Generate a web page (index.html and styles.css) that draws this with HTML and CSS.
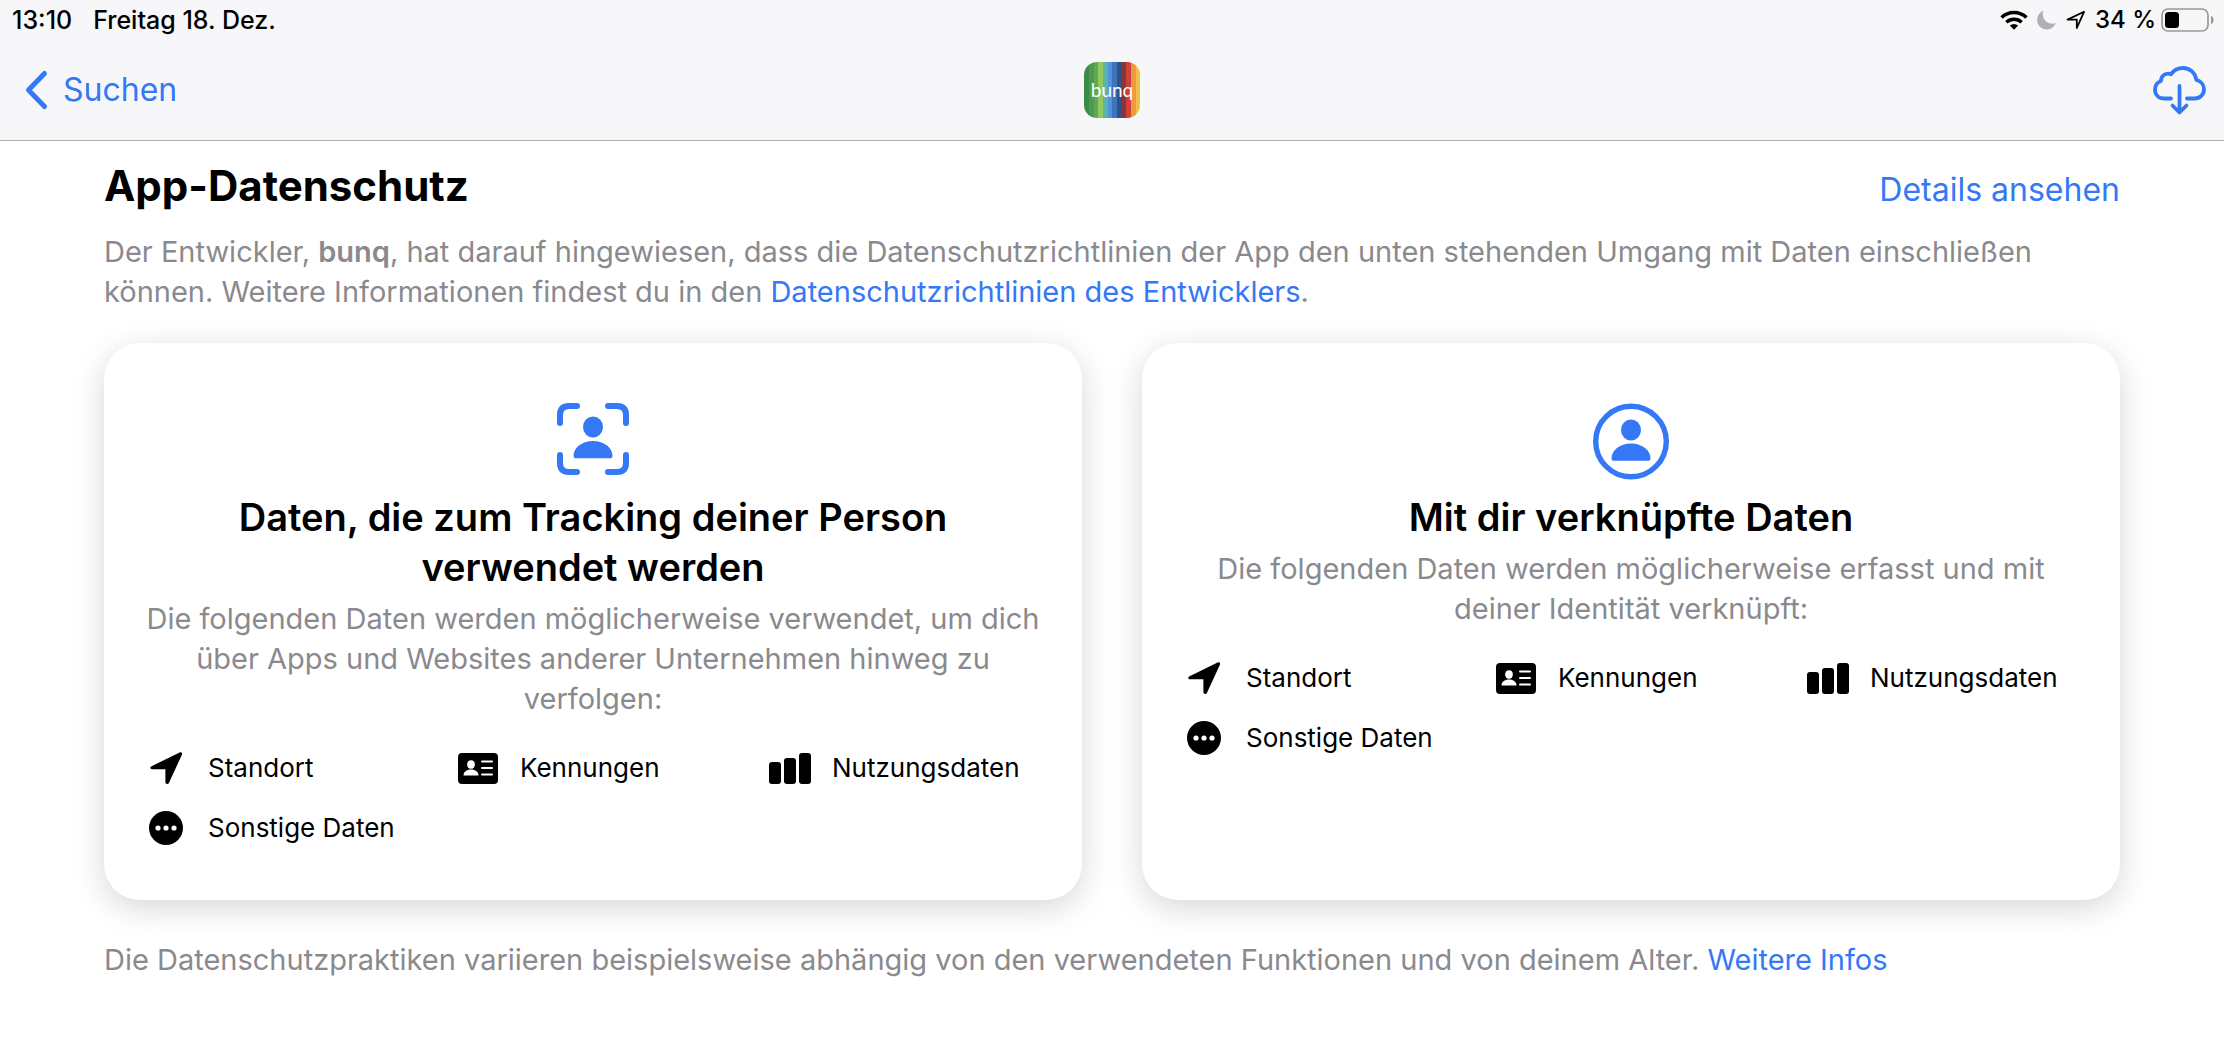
FILE: index.html
```html
<!DOCTYPE html>
<html lang="de">
<head>
<meta charset="utf-8">
<meta name="viewport" content="width=device-width, initial-scale=1">
<title>bunq</title>
<link rel="stylesheet" href="styles.css">
</head>

<body>

<!-- shared symbols -->
<svg class="symbols" aria-hidden="true">
  <symbol id="location" viewBox="0 0 42 36">
    <path d="M6.600 16.200 34.600 2.500c1.700-.8 3.100.5 2.300 2.300L24 32.700c-.9 2-3.600 1.600-3.600-.6V19.200H7.200c-2.300 0-2.500-2.100-.6-3z"/>
  </symbol>
  <symbol id="idcard" viewBox="0 0 42 36">
    <rect x="1" y="3" width="40" height="31" rx="4"/>
    <g fill="#fff">
      <ellipse cx="14" cy="14.500" rx="3.800" ry="4.200"/>
      <path d="M6.500 25.500c0-3.500 3-6 7.500-6s7.500 2.500 7.500 6z"/>
      <rect x="24" y="10.500" width="12" height="2" rx="1"/>
      <rect x="24" y="17" width="12" height="2" rx="1"/>
      <rect x="24" y="23.500" width="12" height="2" rx="1"/>
    </g>
  </symbol>
  <symbol id="bars" viewBox="0 0 42 36">
    <rect x="0" y="12" width="12" height="22" rx="3"/>
    <rect x="15" y="8" width="12" height="26" rx="3"/>
    <rect x="30" y="3" width="12" height="31" rx="3"/>
  </symbol>
  <symbol id="more" viewBox="0 0 42 36">
    <circle cx="21" cy="18" r="17"/>
    <g fill="#fff">
      <circle cx="13" cy="18" r="2.600"/>
      <circle cx="21" cy="18" r="2.600"/>
      <circle cx="29" cy="18" r="2.600"/>
    </g>
  </symbol>
</svg>

<header class="topbar">
  <div class="status">
    <div class="status-group status-left">
      <span>13:10</span>
      <span>Freitag 18. Dez.</span>
    </div>
    <div class="status-group">
      <svg class="wifi" viewBox="0 0 28 20" width="28" height="20">
        <g fill="none" stroke="#000" stroke-width="3.400">
          <path d="M1.500 7.500a18 18 0 0 1 25 0"/>
          <path d="M6.300 12.300a11.300 11.300 0 0 1 15.400 0"/>
        </g>
        <path d="M9.800 15.600a6.200 6.200 0 0 1 8.400 0L14 19.800z"/>
      </svg>
      <svg class="moon" viewBox="0 0 20 20" width="20" height="20">
        <path d="M6.500.8A9.600 9.600 0 1 0 18.800 13 9.400 9.400 0 0 1 6.500.8z" fill="#b0b0b2"/>
      </svg>
      <svg class="arrow" viewBox="0 0 20 20" width="20" height="20">
        <path d="M1.500 9.600 18 1.800 10.800 18V9.600z" fill="none" stroke="#000" stroke-width="1.800" stroke-linejoin="round"/>
      </svg>
      <span>34 %</span>
      <svg class="battery" viewBox="0 0 54 24" width="54" height="24">
        <rect x="1" y="1" width="46" height="22" rx="6" fill="none" stroke="#999" stroke-width="1.700"/>
        <rect x="4" y="4" width="14" height="16" rx="3.500"/>
        <path d="M50 8c3.500 1 3.500 7 0 8z" fill="#999"/>
      </svg>
    </div>
  </div>
  <nav class="navbar">
    <a class="back" href="#">
      <svg viewBox="0 0 24 38" width="24" height="38">
        <path d="M20.500 2.500 4.500 19l16 16.500" fill="none" stroke="currentColor" stroke-width="5" stroke-linecap="round" stroke-linejoin="round"/>
      </svg>
      <span>Suchen</span>
    </a>
    <div class="app-icon"><span>bunq</span></div>
    <button class="download" type="button" aria-label="Laden">
      <svg viewBox="0 0 54 50" width="54" height="50">
        <g fill="none" stroke="currentColor" stroke-width="3.800" stroke-linecap="round" stroke-linejoin="round">
          <path d="M19 33.500H12.500C6.500 33.500 3 29.500 3 24.500c0-4 2.500-7.200 6-8.500 0-5.500 5-8.800 10-6.800C22 5 26 3 31 3c7 0 12.500 5 13.300 11.800 4.200 1 7.700 4.700 7.700 9.400 0 5.300-4 9.300-9.500 9.300H35"/>
          <path d="M27.500 21v26M20.500 40.500l7 7 7-7"/>
        </g>
      </svg>
    </button>
  </nav>
</header>

<main class="content">
  <div class="section-head">
    <h1>App-Datenschutz</h1>
    <a href="#">Details ansehen</a>
  </div>
  <p class="intro">Der Entwickler, <b>bunq</b>, hat darauf hingewiesen, dass die Datenschutzrichtlinien der App den unten stehenden Umgang mit Daten einschließen können. Weitere Informationen findest du in den <a href="#">Datenschutzrichtlinien des Entwicklers</a>.</p>

  <div class="cards">
    <section class="card">
      <svg class="card-icon" viewBox="0 0 78 78" width="78" height="78">
        <g fill="none" stroke="currentColor" stroke-width="6" stroke-linecap="round">
          <path d="M6 23V15q0-9 9-9h8"/>
          <path d="M54 6h9q9 0 9 9v8"/>
          <path d="M72 55v8q0 9-9 9h-9"/>
          <path d="M23 72h-8q-9 0-9-9v-8"/>
        </g>
        <g fill="currentColor">
          <ellipse cx="39" cy="27" rx="10" ry="10.500"/>
          <path d="M19.500 56c0-8 8-15 19.500-15s19.500 7 19.500 15q0 2.200-2 2.200h-35q-2 0-2-2.200z"/>
        </g>
      </svg>
      <h2>Daten, die zum Tracking deiner Person verwendet werden</h2>
      <p>Die folgenden Daten werden möglicherweise verwendet, um dich über Apps und Websites anderer Unternehmen hinweg zu verfolgen:</p>
      <ul>
        <li><svg><use href="#location"/></svg>Standort</li>
        <li><svg><use href="#idcard"/></svg>Kennungen</li>
        <li><svg><use href="#bars"/></svg>Nutzungsdaten</li>
        <li><svg><use href="#more"/></svg>Sonstige Daten</li>
      </ul>
    </section>

    <section class="card">
      <svg class="card-icon" viewBox="0 0 78 78" width="78" height="78">
        <circle cx="39" cy="41.500" r="35.300" fill="none" stroke="currentColor" stroke-width="5.400"/>
        <g fill="currentColor">
          <ellipse cx="39" cy="30" rx="10" ry="10.500"/>
          <path d="M19.500 58.500c0-8 8-15 19.500-15s19.500 7 19.500 15q0 2.200-2 2.200h-35q-2 0-2-2.200z"/>
        </g>
      </svg>
      <h2>Mit dir verknüpfte Daten</h2>
      <p>Die folgenden Daten werden möglicherweise erfasst und mit deiner Identität verknüpft:</p>
      <ul>
        <li><svg><use href="#location"/></svg>Standort</li>
        <li><svg><use href="#idcard"/></svg>Kennungen</li>
        <li><svg><use href="#bars"/></svg>Nutzungsdaten</li>
        <li><svg><use href="#more"/></svg>Sonstige Daten</li>
      </ul>
    </section>
  </div>

  <p class="footnote">Die Datenschutzpraktiken variieren beispielsweise abhängig von den verwendeten Funktionen und von deinem Alter. <a href="#">Weitere Infos</a></p>
</main>

</body>
</html>
```

FILE: styles.css
```css
* {
  box-sizing: border-box;
}

body {
  margin: 0;
  background-color: #fff;
  color: #000;
  font-family: Inter, "Liberation Sans", sans-serif;
  font-size: 29px;
  line-height: 40px;
}

h1, h2, p, ul {
  margin: 0;
  padding: 0;
}

a {
  color: #3478f6;
  text-decoration: none;
}

svg {
  display: block;
  flex: none;
  overflow: visible;
}

.symbols {
  position: absolute;
  width: 0;
  height: 0;
}

/* status and navigation bar */
.topbar {
  background-color: #f7f7f9;
  border-bottom: 1px solid #b0b0b2;
}

.status {
  display: flex;
  justify-content: space-between;
  height: 40px;
  padding: 0 9px 0 12px;
  font-size: 24px;
  font-weight: 500;
}

.status-group {
  display: flex;
  align-items: center;
  gap: 9px;
}

.status-left {
  gap: 21px;
  font-size: 25px;
}

.battery {
  margin-left: -4px;
}

.navbar {
  display: grid;
  grid-template-columns: 1fr auto 1fr;
  align-items: center;
  height: 100px;
  padding: 0 18px;
}

.back {
  display: flex;
  align-items: center;
  gap: 15px;
  padding-left: 6px;
  font-size: 32px;
}

.app-icon {
  display: flex;
  align-items: center;
  justify-content: center;
  width: 56px;
  height: 56px;
  border-radius: 13px;
  background: linear-gradient(90deg,
    #3b8a47 0 9%, #4d9a4c 9% 17%, #5fa956 17% 25%, #92ca62 25% 34%,
    #5bb5a6 34% 42%, #4f93dc 42% 50%, #3f74bd 50% 59%, #2d5488 59% 67%,
    #8c3538 67% 75%, #cf3f3c 75% 84%, #ee9a3c 84% 92%, #efc04a 92%);
  color: #fff;
  font-family: Lato, sans-serif;
  font-size: 19px;
  line-height: 20px;
}

.download {
  justify-self: end;
  padding: 0;
  border: 0;
  background: none;
  color: #3478f6;
}

/* privacy section */
.content {
  padding: 19px 104px 56px;
}

.section-head {
  display: flex;
  align-items: baseline;
  justify-content: space-between;
  font-size: 32px;
}

h1 {
  font-size: 42px;
  font-weight: 700;
  line-height: 52px;
}

.intro, .footnote, .card p {
  color: #8a8a8e;
}

.intro {
  margin-top: 20px;
}

.intro b {
  font-weight: 600;
}

.cards {
  display: grid;
  grid-template-columns: 1fr 1fr;
  gap: 60px;
  margin-top: 31px;
}

.card {
  padding: 57px 40px 42px;
  border-radius: 36px;
  background-color: #fff;
  box-shadow: 0 8px 32px rgba(0, 0, 0, 0.16);
  text-align: center;
}

.card-icon {
  margin: 0 auto 14px;
  color: #3478f6;
}

.card h2 {
  font-size: 38px;
  font-weight: 600;
  line-height: 50px;
}

.card p {
  margin-top: 7px;
}

.card ul {
  display: grid;
  grid-template-columns: repeat(3, 1fr);
  gap: 0 38px;
  margin-top: 19px;
  list-style: none;
  text-align: left;
  font-size: 26px;
}

.card li {
  display: flex;
  align-items: center;
  gap: 21px;
  height: 60px;
  padding-left: 1px;
  white-space: nowrap;
}

.card li svg {
  width: 42px;
  height: 36px;
}

.footnote {
  margin-top: 40px;
}
```
